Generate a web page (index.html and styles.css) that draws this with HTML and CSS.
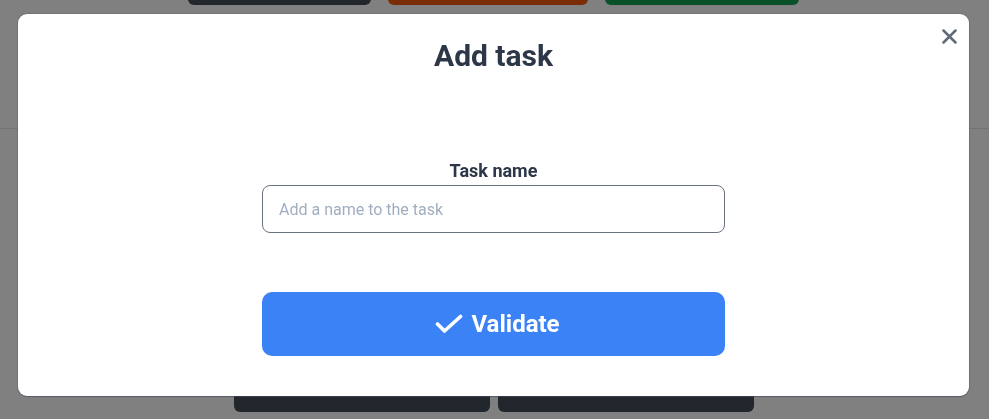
FILE: index.html
```html
<!DOCTYPE html>
<html lang="en">
<head>
<meta charset="utf-8">
<title>Add task</title>
<link rel="stylesheet" href="styles.css">
</head>
<body>
<div class="page">
  <header class="header">
    <div class="actions">
      <button class="bg-btn dark w183"></button>
      <button class="bg-btn orange w200"></button>
      <button class="bg-btn green w194"></button>
    </div>
  </header>
  <main class="main">
    <div class="bottom-actions">
      <button class="bg-btn2"></button>
      <button class="bg-btn2"></button>
    </div>
  </main>
</div>

<div class="overlay">
  <div class="modal">
    <button class="close" aria-label="Close">
      <svg width="15" height="15" viewBox="0 0 15 15"><path d="M1.5 1.5 L13.5 13.5 M13.5 1.5 L1.5 13.5" stroke="#5f6a7a" stroke-width="2.5" stroke-linecap="round"/></svg>
    </button>
    <h2 class="title">Add task</h2>
    <form class="form">
      <label class="label" for="task">Task name</label>
      <input class="input" id="task" type="text" placeholder="Add a name to the task">
      <button class="validate" type="button">
        <svg width="28" height="20" viewBox="0 0 28 20"><path d="M2.5 10 L9.5 17 L25.5 2.5" fill="none" stroke="#fff" stroke-width="3.6" stroke-linecap="round" stroke-linejoin="round"/></svg>
        <span>Validate</span>
      </button>
    </form>
  </div>
</div>
</body>
</html>
```

FILE: styles.css
```css
* { box-sizing: border-box; }
html, body { margin: 0; padding: 0; }
body {
  width: 989px;
  height: 419px;
  overflow: hidden;
  background: #808080;
  font-family: Roboto, "Liberation Sans", sans-serif;
}
.page { height: 419px; display: flex; flex-direction: column; }
.header {
  height: 129px;
  border-bottom: 1px solid #737373;
}
.actions {
  display: flex;
  justify-content: center;
  gap: 17px;
  margin-top: -35px;
  padding-right: 3px;
}
.bg-btn {
  height: 40px;
  border: 0;
  border-radius: 6px;
}
.w183 { width: 183px; }
.w200 { width: 200px; }
.w194 { width: 194px; }
.dark { background: #22272e; }
.orange { background: #7a2c07; }
.green { background: #0a5028; }
.main { flex: 1; display: flex; flex-direction: column; justify-content: flex-end; padding-bottom: 7px; }
.bottom-actions { display: flex; justify-content: center; gap: 8px; padding-right: 2px; }
.bg-btn2 {
  width: 256px;
  height: 56px;
  border: 0;
  border-radius: 6px;
  background: #22272e;
}

.overlay {
  position: fixed;
  inset: 0;
}
.modal {
  position: absolute;
  left: 18px;
  top: 14px;
  width: 951px;
  height: 382px;
  background: #fff;
  border-radius: 9px;
  box-shadow: 0 0 0 1px rgba(70, 80, 100, 0.25), 0 1px 1px rgba(60, 70, 90, 0.5);
  padding-top: 24px;
  display: flex;
  flex-direction: column;
  align-items: center;
}
.close {
  position: absolute;
  right: 12px;
  top: 15px;
  border: 0;
  background: none;
  padding: 0;
  width: 15px;
  height: 15px;
  display: flex;
}
.title {
  margin: 0;
  font-size: 30px;
  line-height: 36px;
  font-weight: 700;
  color: #2d3748;
}
.form {
  width: 463px;
  margin-top: 83px;
  display: flex;
  flex-direction: column;
  align-items: center;
}
.label {
  font-size: 18px;
  line-height: 28px;
  font-weight: 700;
  color: #2d3748;
}
.input {
  width: 100%;
  height: 48px;
  border: 1px solid #6b7280;
  border-radius: 8px;
  padding: 0 16px;
  font-family: inherit;
  font-size: 16px;
  color: #2d3748;
  outline: none;
}
.input::placeholder { color: #a0aec0; }
.validate {
  margin-top: 59px;
  width: 100%;
  height: 64px;
  border: 0;
  border-radius: 10px;
  background: #3b82f6;
  color: #fff;
  font-family: inherit;
  font-size: 24px;
  font-weight: 700;
  display: flex;
  align-items: center;
  justify-content: center;
  gap: 8px;
  padding: 0 0 0 8px;
}
```
